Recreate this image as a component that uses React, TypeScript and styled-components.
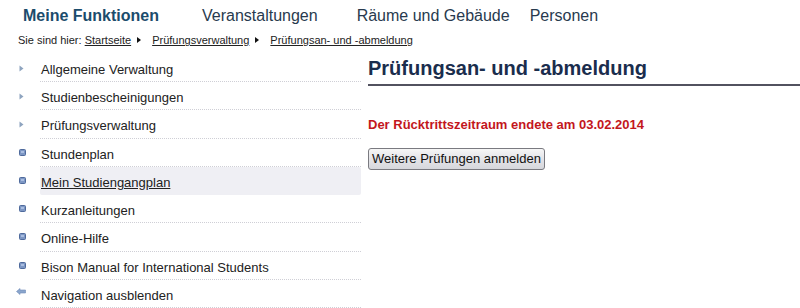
import React from "react";
import styled, { createGlobalStyle } from "styled-components";

const GlobalStyle = createGlobalStyle`
  html, body {
    margin: 0;
    padding: 0;
    background: #ffffff;
  }
  body {
    font-family: "Liberation Sans", Arial, sans-serif;
    color: #222;
    width: 800px;
    height: 308px;
    overflow: hidden;
  }
`;

const Page = styled.div`
  width: 800px;
  height: 308px;
  display: flex;
  flex-direction: column;
`;

const TopNav = styled.nav`
  height: 32px;
  display: flex;
  align-items: center;
  padding-left: 23px;
`;

const NavItem = styled.a<{ $ml: number; $active?: boolean }>`
  margin-left: ${(p) => p.$ml}px;
  font-size: 16px;
  line-height: 18px;
  font-weight: ${(p) => (p.$active ? "bold" : "normal")};
  color: ${(p) => (p.$active ? "#1b4c6c" : "#283a4e")};
  text-decoration: none;
  white-space: nowrap;
`;

const Breadcrumb = styled.div`
  height: 23px;
  box-sizing: border-box;
  padding: 3px 0 0 18px;
  font-size: 11px;
  line-height: 13px;
  display: flex;
  align-items: flex-start;
  color: #222;
`;

const Crumb = styled.a`
  color: #222;
  text-decoration: underline;
`;

const CrumbArrow = styled.span`
  display: inline-block;
  width: 0;
  height: 0;
  margin: 3px 11px 0 6px;
  border-top: 3px solid transparent;
  border-bottom: 3px solid transparent;
  border-left: 4px solid #111;
`;

const Body = styled.div`
  flex: 1;
  display: flex;
  gap: 7px;
`;

const Sidebar = styled.ul`
  list-style: none;
  margin: 0;
  padding: 0;
  width: 361px;
  display: flex;
  flex-direction: column;
`;

const SideRow = styled.li`
  display: flex;
  height: 28.25px;
`;

const IconCell = styled.div<{ $top: number }>`
  width: 40px;
  flex: none;
  box-sizing: border-box;
  display: flex;
  align-items: flex-start;
  padding: ${(p) => p.$top}px 0 0 ${(p) => (p.$top === 8 ? 16 : 19)}px;
  svg {
    display: block;
  }
`;

const Label = styled.a<{ $current?: boolean }>`
  flex: 1;
  box-sizing: border-box;
  padding: 8px 0 0 1px;
  font-size: 13px;
  line-height: 15px;
  color: #222;
  text-decoration: ${(p) => (p.$current ? "underline" : "none")};
  background: ${(p) => (p.$current ? "#efeff4" : "transparent")};
  border-radius: ${(p) => (p.$current ? "2px" : "0")};
  border-bottom: 1px dotted ${(p) => (p.$current ? "transparent" : "#cfcfd6")};
`;

const Main = styled.main`
  flex: 1;
  display: flex;
  flex-direction: column;
  align-items: flex-start;
`;

const Heading = styled.h1`
  align-self: stretch;
  margin: 3px 0 0 0;
  padding: 0 0 4px 0;
  font-size: 20px;
  line-height: 23px;
  font-weight: bold;
  color: #1a2d4d;
  border-bottom: 2px solid #52525f;
`;

const Notice = styled.p`
  margin: 31px 0 0 0;
  font-size: 13px;
  line-height: 15px;
  font-weight: bold;
  color: #c3161c;
`;

const Button = styled.button`
  margin-top: 16px;
  height: 22px;
  box-sizing: border-box;
  padding: 0 3px;
  font-family: "Liberation Sans", Arial, sans-serif;
  font-size: 13px;
  line-height: 16px;
  color: #111;
  background: linear-gradient(#f6f6f6, #e4e4e8 50%, #d6d7dc);
  border: 1px solid #7a7a80;
  border-radius: 3px;
`;

const Triangle = () => (
  <svg width="5" height="7" viewBox="0 0 5 7">
    <path d="M0.5 0.5 L4.5 3.5 L0.5 6.5 Z" fill="#8ea4bf" />
  </svg>
);

const Square = () => (
  <svg width="7" height="7" viewBox="0 0 7 7">
    <rect x="0.5" y="0.5" width="6" height="6" rx="1" fill="#7d97c4" stroke="#4f6a9c" />
    <rect x="2" y="2" width="3" height="2" fill="#a9bde0" />
  </svg>
);

const BackArrow = () => (
  <svg width="10" height="7" viewBox="0 0 10 7">
    <path d="M0.5 3.5 L4 0.5 L4 2 L9.5 2 L9.5 5 L4 5 L4 6.5 Z" fill="#8aa5cc" stroke="#6f8cb8" strokeWidth="0.6" />
  </svg>
);

type Item = { label: string; icon: "tri" | "sq" | "back"; current?: boolean };

const items: Item[] = [
  { label: "Allgemeine Verwaltung", icon: "tri" },
  { label: "Studienbescheinigungen", icon: "tri" },
  { label: "Prüfungsverwaltung", icon: "tri" },
  { label: "Stundenplan", icon: "sq" },
  { label: "Mein Studiengangplan", icon: "sq", current: true },
  { label: "Kurzanleitungen", icon: "sq" },
  { label: "Online-Hilfe", icon: "sq" },
  { label: "Bison Manual for International Students", icon: "sq" },
  { label: "Navigation ausblenden", icon: "back" },
];

function App() {
  return (
    <Page>
      <GlobalStyle />
      <TopNav>
        <NavItem $ml={0} $active>Meine Funktionen</NavItem>
        <NavItem $ml={43}>Veranstaltungen</NavItem>
        <NavItem $ml={39}>Räume und Gebäude</NavItem>
        <NavItem $ml={20}>Personen</NavItem>
      </TopNav>
      <Breadcrumb>
        Sie sind hier:&nbsp;<Crumb>Startseite</Crumb>
        <CrumbArrow />
        <Crumb>Prüfungsverwaltung</Crumb>
        <CrumbArrow />
        <Crumb>Prüfungsan- und -abmeldung</Crumb>
      </Breadcrumb>
      <Body>
        <Sidebar>
          {items.map((it) => (
            <SideRow key={it.label}>
              <IconCell $top={it.icon === "tri" ? 11 : it.icon === "sq" ? 10 : 8}>
                {it.icon === "tri" && <Triangle />}
                {it.icon === "sq" && <Square />}
                {it.icon === "back" && <BackArrow />}
              </IconCell>
              <Label $current={it.current}>{it.label}</Label>
            </SideRow>
          ))}
        </Sidebar>
        <Main>
          <Heading>Prüfungsan- und -abmeldung</Heading>
          <Notice>Der Rücktrittszeitraum endete am 03.02.2014</Notice>
          <Button>Weitere Prüfungen anmelden</Button>
        </Main>
      </Body>
    </Page>
  );
}

export default App;
